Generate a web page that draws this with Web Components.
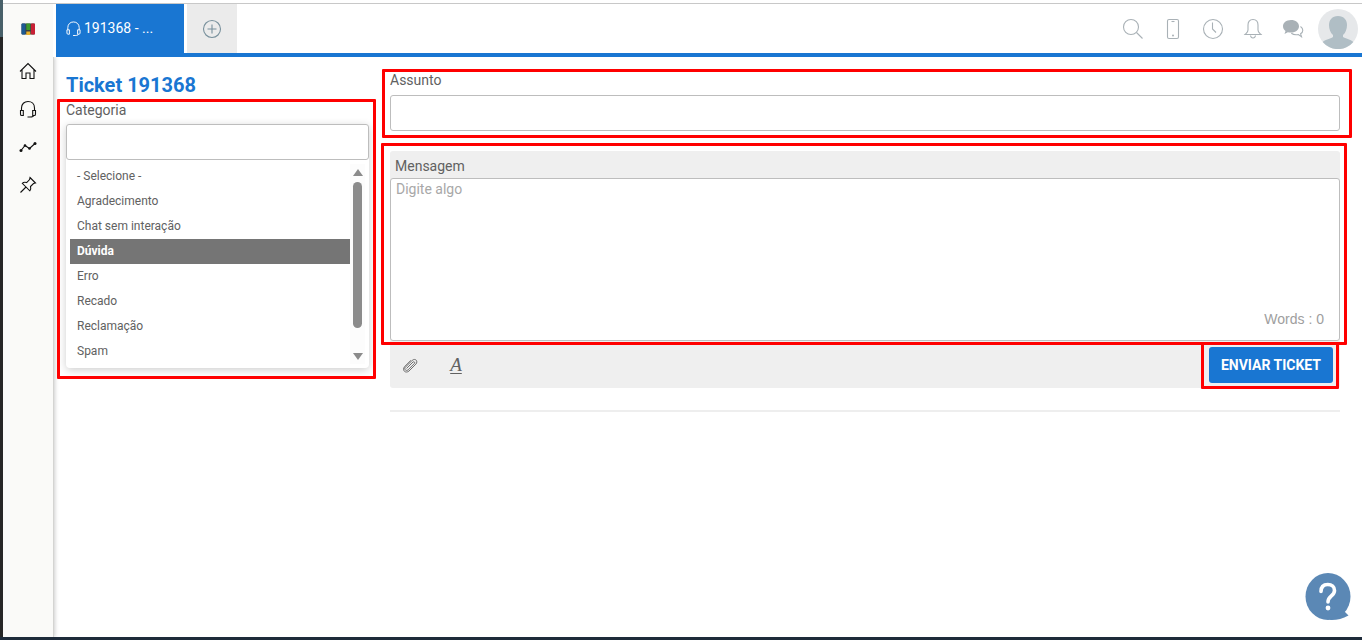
<!DOCTYPE html>
<html lang="pt-BR">
<head>
<meta charset="utf-8">
<meta name="viewport" content="width=device-width, initial-scale=1">
<title>Ticket 191368</title>
<style>
  body { margin: 0; background: #fff; color: #616161; font: 14px/20px Roboto, "Liberation Sans", sans-serif; }
</style>
</head>
<body>
<desk-app>
  <desk-topbar slot="top"></desk-topbar>
  <desk-sidebar slot="side"></desk-sidebar>
  <ticket-page>
    <ticket-category slot="aside"></ticket-category>
    <ticket-composer></ticket-composer>
  </ticket-page>
</desk-app>

<script>
const ICONS = {
  logo: '<rect x="5.500" y="6.500" width="13.500" height="11" rx="1" fill="#3a3f44"/><rect x="5.500" y="6.500" width="4" height="11" rx="1" fill="#1d5a94"/><rect x="10.300" y="6.500" width="4" height="6.500" fill="#3c9a2c"/><path d="M10.300 14.500h4V18h-4z" fill="#e8b02a"/><rect x="15" y="6.500" width="4" height="11" rx="1" fill="#c81f35"/>',
  home: '<path d="M4 12.500 12 4.500l8 8M6 10.500V19.500h4v-5.500h4v5.500h4v-9"/>',
  headset: '<path d="M5.500 13.500v-2.500C5.500 7 8.300 4.500 12 4.500S18.500 7 18.500 11v2.500M4.500 13.500h2.800v5H5.800c-.8 0-1.300-.5-1.300-1.300zM19.500 13.500h-2.800v5h1.500c.8 0 1.300-.5 1.300-1.300zM17.500 18.500c0 1-1.500 1.500-3.500 1.500h-2.500"/>',
  chart: '<path d="M5 15.500 9 10.500l4.500 3L19 8.500"/><g fill="currentColor" stroke="none"><circle cx="5" cy="15.500" r="1.500"/><circle cx="9" cy="10.500" r="1.300"/><circle cx="13.500" cy="13.500" r="1.300"/><circle cx="19" cy="8.500" r="1.500"/></g>',
  pin: '<path d="m14 4.500 5.500 5.500-2 .5-3 3c.6 2 .2 3.300-.7 4.300L6.300 10.300c1-1 2.500-1.300 4.300-.7l3-3zM10 14l-5.500 5.500"/>',
  plus: '<circle cx="12" cy="12" r="8.500"/><path d="M12 7.500v9M7.500 12h9"/>',
  search: '<circle cx="10" cy="10" r="7.500"/><path d="m15.500 15.500 6 6"/>',
  phone: '<rect x="6.500" y="2.500" width="11" height="19" rx="1.500"/><path d="M10.500 4.500h3"/><circle cx="12" cy="18.500" r="1" fill="currentColor" stroke="none"/>',
  clock: '<circle cx="12" cy="12" r="9.500"/><path d="M11.500 5.500V12l3.500 3.500"/>',
  bell: '<path d="M12 2.500c-3.500 0-5 2.500-5 5.500v5c0 2-1 2.500-3 4.500h16c-2-2-3-2.500-3-4.500V8c0-3-1.500-5.500-5-5.500zM9.500 18.500c.3 1.800 1.200 2.500 2.500 2.500s2.200-.7 2.500-2.500"/>',
  chat: '<path d="M10 3c-4.700 0-8 2.800-8 6.300 0 2 1 3.500 2.500 4.700l-1 3 3.300-1.800c1 .3 2 .4 3.200.4 4.700 0 8-2.700 8-6.300S14.700 3 10 3z" fill="currentColor" stroke="none"/><path d="M19.500 9.500c1.500 1 2.300 2.200 2.300 3.700 0 1.500-.8 2.700-2.200 3.600l.9 2.900-3.200-2.200c-2.700.5-5.300 0-7-1.200"/>',
  clip: '<path stroke-width=".9" d="m8.500 15.500 6.500-6.500c1-.9 2.400.5 1.400 1.500l-6.400 6.400c-1.900 1.600-4.300-.7-2.700-2.600l6.900-6.900c3-2.600 6.300.7 3.700 3.700l-6.900 6.900c-3.500 2.900-7.300-.8-4.400-4.400L13 7.200"/>'
};

/* Shared base: clones the subclass template into an open shadow root. */
class DeskElement extends HTMLElement {
  constructor() {
    super();
    const t = document.createElement('template');
    t.innerHTML = `<style>:host, *, *::before { box-sizing: border-box; } ${this.constructor.css}</style>${this.constructor.html}`;
    this.attachShadow({ mode: 'open' }).append(t.content.cloneNode(true));
  }
}

customElements.define('desk-icon', class extends HTMLElement {
  connectedCallback() {
    if (this.shadowRoot) return;
    this.attachShadow({ mode: 'open' }).innerHTML =
      `<style>:host { display: block; width: 24px; height: 24px; flex: none; } svg { display: block; width: 100%; height: 100%; }</style>
       <svg viewBox="0 0 24 24" fill="none" stroke="${this.getAttribute('name') === 'logo' ? 'none' : 'currentColor'}" stroke-width="1.1" aria-hidden="true">${ICONS[this.getAttribute('name')]}</svg>`;
  }
});

customElements.define('desk-app', class extends DeskElement {
  static css = `
    :host { display: flex; flex-direction: column; position: relative; min-height: 100vh; padding: 3px 0 0 3px; border-bottom: 3px solid #1e2b3a; }
    :host::before { content: ""; position: absolute; left: 0; top: 0; bottom: 0; width: 3px; background: linear-gradient(#486069 37px, #262626 37px); }
    .body { display: flex; flex: 1; }
    main { flex: 1; min-width: 0; }
    .help { position: absolute; right: 9px; bottom: 16px; width: 50px; height: 50px; padding: 0; border: 0; background: none; }
    .help svg { display: block; }
  `;
  static html = `
    <slot name="top"></slot>
    <div class="body"><slot name="side"></slot><main><slot></slot></main></div>
    <button class="help" aria-label="Ajuda"><svg width="50" height="50" viewBox="0 0 50 50"><g fill="#5b88b5"><ellipse cx="25" cy="25.500" rx="22.500" ry="23.500"/><path d="M26 49c7 .5 13-1 19.500-4.500L41 40z"/></g><path d="M18 20.500c0-5 3-7 6.800-7 4 0 6.700 2.300 6.700 6 0 5.500-6.500 5.500-6.500 11.500" fill="none" stroke="#fff" stroke-width="3.600" stroke-linecap="round"/><circle cx="25" cy="37" r="2.400" fill="#fff"/></svg></button>`;
});

customElements.define('desk-topbar', class extends DeskElement {
  static css = `
    :host { display: block; }
    header { display: flex; height: 54px; border-top: 1px solid #c8c8c8; border-bottom: 4px solid #1976d2; }
    .logo { display: grid; place-items: center; width: 53px; height: 53px; padding: 0 3px 4px 0; background: linear-gradient(90deg, #fafaf8 50px, #fff 50px); }
    .tab { display: flex; align-items: center; width: 128px; height: 53px; padding: 0 7px 5px; color: #fff; background: #1976d2; text-decoration: none; }
    .tab desk-icon { width: 21px; height: 21px; }
    button { display: grid; place-items: center; padding: 0; border: 0; color: inherit; background: none; }
    .add { width: 50px; height: 49px; margin-left: 3px; background: #ebebeb; color: #78909c; }
    .tools { display: flex; align-items: center; gap: 16px; height: 49px; margin-left: auto; padding-right: 4px; color: #a9b1b6; }
    .avatar { width: 40px; height: 40px; margin-left: -3px; }
    .avatar svg { display: block; }
  `;
  static html = `
    <header>
      <a class="logo" href="#inicio" aria-label="Início"><desk-icon name="logo"></desk-icon></a>
      <a class="tab" href="#ticket"><desk-icon name="headset"></desk-icon><span>191368 - ...</span></a>
      <button class="add" aria-label="Nova aba"><desk-icon name="plus"></desk-icon></button>
      <div class="tools">
        <button aria-label="Pesquisar"><desk-icon name="search"></desk-icon></button>
        <button aria-label="Celular"><desk-icon name="phone"></desk-icon></button>
        <button aria-label="Histórico"><desk-icon name="clock"></desk-icon></button>
        <button aria-label="Notificações"><desk-icon name="bell"></desk-icon></button>
        <button aria-label="Conversas"><desk-icon name="chat"></desk-icon></button>
        <button class="avatar" aria-label="Perfil"><svg width="40" height="40" viewBox="0 0 40 40"><circle cx="20" cy="20" r="20" fill="#e6e8ea"/><path d="M20 7c6 0 9 4 9 9 0 4-1.500 8-4 10v2c4 2 7 2 10.300 5A20 20 0 0 1 4.700 33C8 30 12 30 15 28v-2c-2.500-2-4-6-4-10 0-5 3-9 9-9z" fill="#b0bec5"/></svg></button>
      </div>
    </header>`;
});

customElements.define('desk-sidebar', class extends DeskElement {
  static css = `
    :host { display: block; flex: none; width: 51px; background: #fafaf8; border-right: 1px solid #d4d4d2; box-shadow: 1px 0 4px #00000033; clip-path: inset(0 -6px 0 0); }
    nav { display: flex; flex-direction: column; align-items: center; gap: 14px; padding-top: 2px; color: #111; }
    a { color: inherit; }
  `;
  static html = `
    <nav>
      <a href="#home" aria-label="Home"><desk-icon name="home"></desk-icon></a>
      <a href="#tickets" aria-label="Tickets"><desk-icon name="headset"></desk-icon></a>
      <a href="#graficos" aria-label="Gráficos"><desk-icon name="chart"></desk-icon></a>
      <a href="#fixados" aria-label="Fixados"><desk-icon name="pin"></desk-icon></a>
    </nav>`;
});

customElements.define('ticket-page', class extends DeskElement {
  static css = `
    :host { display: grid; grid-template-columns: minmax(200px, 303px) minmax(0, 1fr); gap: 21px; padding: 13px 22px 0 12px; }
    h1 { margin: 0; font-size: 20px; line-height: 30px; font-weight: 700; color: #1976d2; }
  `;
  static html = `<section><h1>Ticket 191368</h1><slot name="aside"></slot></section><slot></slot>`;
});

/* Red outline laid over the block that contains it. */
customElements.define('mark-frame', class extends DeskElement {
  static css = `:host { position: absolute; inset: var(--frame, 0); border: 3px solid #f00; border-radius: 1px; pointer-events: none; }`;
  static html = ``;
});

const FIELD = `
  label { display: block; line-height: 20px; }
  input { display: block; width: 100%; height: 36px; padding: 0 8px; border: 1px solid #bdbdbd; border-radius: 3px; background: #fff; font: inherit; color: inherit; outline: 0; }
`;

customElements.define('ticket-category', class extends DeskElement {
  static css = `${FIELD}
    :host { display: block; position: relative; }
    mark-frame { --frame: -1px -7px -11px -9px; }
    .combo { margin-top: 4px; border-radius: 4px; box-shadow: 0 2px 8px #00000033; }
    .list { display: flex; padding: 4px; }
    select { flex: 1; min-width: 0; height: 200px; padding: 0; border: 0; outline: 0; overflow: hidden; background: #fff; color: #616161; font: 12px/15px Roboto, "Liberation Sans", sans-serif; }
    option { padding: 5px 7px; min-height: 25px; line-height: 15px; color: #616161; }
    option:checked { background: #757575 linear-gradient(#757575, #757575); color: #fff; font-weight: 700; }
    .bar { display: flex; flex-direction: column; align-items: center; width: 15px; padding: 5px 0 4px; background: #fcfcfc; color: #8b8b8b; }
    .bar i { border: 5px solid transparent; border-top: 0; border-bottom: 7px solid; }
    .bar i:last-child { border-bottom: 0; border-top: 7px solid; }
    .track { flex: 1; align-self: stretch; padding: 6px 3px 25px; }
    .thumb { height: 100%; border-radius: 5px; background: #8b8b8b; }
  `;
  static html = `
    <label for="busca">Categoria</label>
    <div class="combo">
      <input id="busca" type="text">
      <div class="list">
        <select size="8" aria-label="Categorias">
          <option>- Selecione -</option><option>Agradecimento</option><option>Chat sem interação</option><option selected>Dúvida</option>
          <option>Erro</option><option>Recado</option><option>Reclamação</option><option>Spam</option>
        </select>
        <div class="bar" aria-hidden="true"><i></i><div class="track"><div class="thumb"></div></div><i></i></div>
      </div>
    </div>
    <mark-frame></mark-frame>`;
});

customElements.define('ticket-composer', class extends DeskElement {
  static css = `${FIELD}
    :host { display: block; min-width: 0; }
    .subject, .message, .send { position: relative; }
    .subject input { margin-top: 5px; }
    .subject mark-frame { --frame: -1px -12px -7px -8px; }
    .message { margin-top: 20px; padding-top: 5px; background: #efefef; border-radius: 3px 3px 0 0; }
    .message label { padding: 0 5px 2px; }
    .message mark-frame { --frame: -8px -7px -4px -9px; }
    textarea { display: block; width: 100%; height: 163px; padding: 0 5px; border: 1px solid #bdbdbd; border-radius: 3px; outline: 0; resize: none; font: inherit; color: inherit; background: #fff; }
    textarea::placeholder { color: #a8a8a8; }
    .words { position: absolute; right: 16px; bottom: 12px; color: #9e9e9e; font-family: "Liberation Sans", Arial, sans-serif; }
    .bar { display: flex; align-items: center; gap: 22px; height: 47px; padding: 0 7px 0 8px; background: #efefef; border-radius: 0 0 3px 3px; }
    button { padding: 0; border: 0; background: none; color: #616161; font: inherit; }
    .letter { width: 24px; font: italic 19px/20px "Liberation Serif", serif; text-decoration: underline; text-underline-offset: 2px; text-decoration-thickness: 1px; }
    .send { margin-left: auto; }
    .send button { display: block; height: 36px; padding: 0 12px; border-radius: 3px; background: #1976d2; color: #fff; font-weight: 700; }
    .send mark-frame { --frame: -5px -6px -6px -8px; }
    hr { height: 2px; margin: 22px 0 0; border: 0; background: #eee; }
  `;
  static html = `
    <div class="subject"><label for="assunto">Assunto</label><input id="assunto" type="text"><mark-frame></mark-frame></div>
    <div class="message"><label for="mensagem">Mensagem</label><textarea id="mensagem" placeholder="Digite algo"></textarea><span class="words">Words : 0</span><mark-frame></mark-frame></div>
    <div class="bar">
      <button aria-label="Anexar arquivo"><desk-icon name="clip"></desk-icon></button>
      <button class="letter" aria-label="Formatar texto">A</button>
      <div class="send"><button>ENVIAR TICKET</button><mark-frame></mark-frame></div>
    </div>
    <hr>`;
});
</script>
</body>
</html>
